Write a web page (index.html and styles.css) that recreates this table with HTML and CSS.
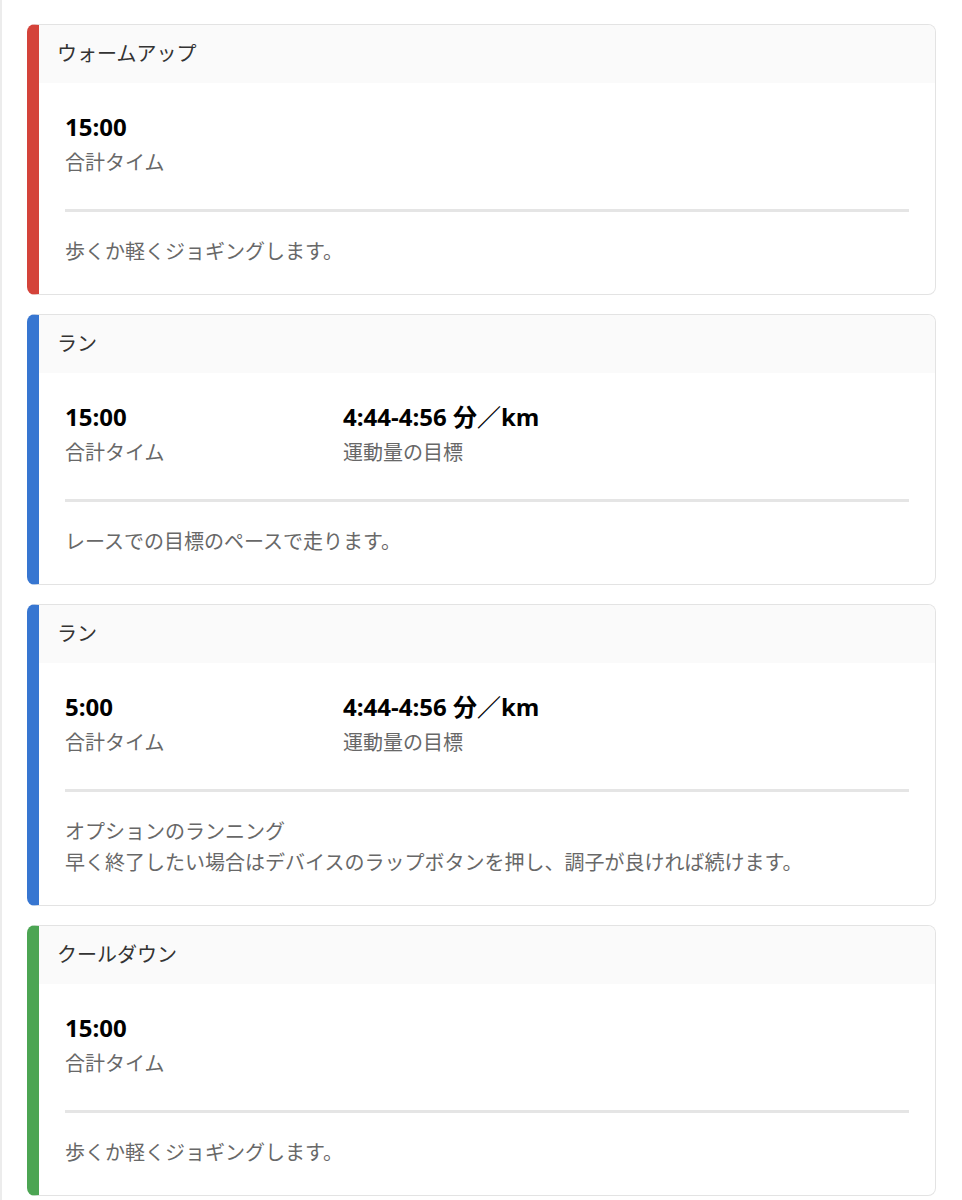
FILE: index.html
```html
<!DOCTYPE html>
<html lang="ja">
<head>
<meta charset="utf-8">
<title>ワークアウト</title>
<link rel="stylesheet" href="styles.css">
</head>
<body>
<div class="page">
  <section class="step step-warmup">
    <div class="step-head">ウォームアップ</div>
    <div class="step-body">
      <div class="stats">
        <div class="stat">
          <div class="stat-value">15:00</div>
          <div class="stat-label">合計タイム</div>
        </div>
      </div>
      <div class="sep"></div>
      <div class="desc">歩くか軽くジョギングします。</div>
    </div>
  </section>

  <section class="step step-run">
    <div class="step-head">ラン</div>
    <div class="step-body">
      <div class="stats">
        <div class="stat">
          <div class="stat-value">15:00</div>
          <div class="stat-label">合計タイム</div>
        </div>
        <div class="stat">
          <div class="stat-value">4:44-4:56 分／km</div>
          <div class="stat-label">運動量の目標</div>
        </div>
      </div>
      <div class="sep"></div>
      <div class="desc">レースでの目標のペースで走ります。</div>
    </div>
  </section>

  <section class="step step-run">
    <div class="step-head">ラン</div>
    <div class="step-body">
      <div class="stats">
        <div class="stat">
          <div class="stat-value">5:00</div>
          <div class="stat-label">合計タイム</div>
        </div>
        <div class="stat">
          <div class="stat-value">4:44-4:56 分／km</div>
          <div class="stat-label">運動量の目標</div>
        </div>
      </div>
      <div class="sep"></div>
      <div class="desc">オプションのランニング<br>早く終了したい場合はデバイスのラップボタンを押し、調子が良ければ続けます。</div>
    </div>
  </section>

  <section class="step step-cool">
    <div class="step-head">クールダウン</div>
    <div class="step-body">
      <div class="stats">
        <div class="stat">
          <div class="stat-value">15:00</div>
          <div class="stat-label">合計タイム</div>
        </div>
      </div>
      <div class="sep"></div>
      <div class="desc">歩くか軽くジョギングします。</div>
    </div>
  </section>
</div>
</body>
</html>
```
FILE: styles.css
```css
html, body {
  margin: 0;
  padding: 0;
  background: #ffffff;
}

body {
  font-family: "Open Sans", "Noto Sans CJK JP", sans-serif;
  color: #333333;
}

.page {
  border-left: 2px solid #ececec;
  min-height: 1200px;
  box-sizing: border-box;
  padding: 24px 26px 0 25px;
  display: flex;
  flex-direction: column;
  gap: 19px;
}

.step {
  border: 1px solid #e3e3e3;
  border-left: 12px solid #d4433a;
  border-radius: 8px;
  background: #ffffff;
  overflow: hidden;
}

.step-run { border-left-color: #3776d1; }
.step-cool { border-left-color: #4ca553; }

.step-head {
  background: #fafafa;
  height: 58px;
  box-sizing: border-box;
  padding: 15px 18px 0;
  font-size: 20px;
  line-height: 28px;
  color: #333333;
}

.step-body {
  padding: 28px 26px 27px;
}

.stats {
  display: grid;
  grid-template-columns: 278px 1fr;
}

.stat-value {
  font-size: 24px;
  font-weight: 700;
  line-height: 32px;
  color: #000000;
}

.stat-label {
  margin-top: 5px;
  font-size: 20px;
  line-height: 30px;
  color: #686868;
}

.sep {
  height: 3px;
  background: #e5e5e5;
  margin-top: 31px;
}

.desc {
  margin-top: 24px;
  font-size: 20px;
  line-height: 31px;
  color: #686868;
}
```
